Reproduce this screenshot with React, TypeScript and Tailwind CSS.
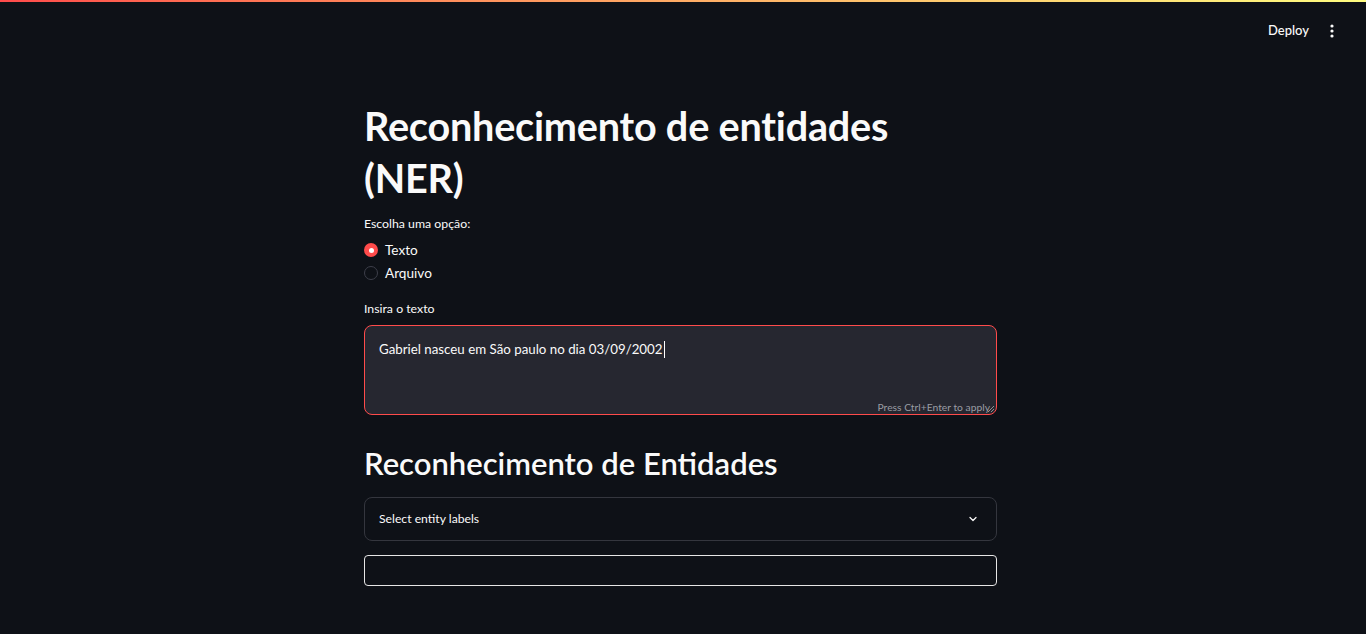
import React from "react";

export default function App() {
  const font = { fontFamily: '"Lato", "Noto Sans", sans-serif' };
  return (
    <div className="min-h-[634px] w-full bg-[#0e1117] text-[#fafafa]" style={font}>
      <div className="h-[2px] w-full bg-gradient-to-r from-[#ff4b4b] to-[#fffd80]" />
      <div className="flex h-[58px] items-center justify-end pr-[32px]">
        <span className="mr-[21px] mb-[1px] text-[13px] font-medium text-[#fafafa]">Deploy</span>
        <svg width="4" height="14" viewBox="0 0 4 14" className="mb-[1px]">
          <circle cx="2" cy="2" r="1.6" fill="#fafafa" />
          <circle cx="2" cy="7" r="1.6" fill="#fafafa" />
          <circle cx="2" cy="12" r="1.6" fill="#fafafa" />
        </svg>
      </div>
      <div className="pr-[5px]">
        <div className="mx-auto w-[633px] pt-[40px]">
          <h1 className="text-[39.6px] font-bold leading-[52px] tracking-[-0.2px]">
            Reconhecimento de entidades (NER)
          </h1>
          <div className="mt-[10px] text-[12.3px] leading-[20px]">Escolha uma opção:</div>
          <div className="mt-[6px] flex flex-col gap-[3px]">
            <div className="flex h-[20px] items-center gap-[7px]">
              <span className="flex h-[14px] w-[14px] items-center justify-center rounded-full bg-[#ff4b4b]">
                <span className="h-[5px] w-[5px] rounded-full bg-white" />
              </span>
              <span className="text-[13.6px]">Texto</span>
            </div>
            <div className="flex h-[20px] items-center gap-[7px]">
              <span className="h-[14px] w-[14px] rounded-full border border-[#3d3f4a] bg-[#0e1117]" />
              <span className="text-[13.6px]">Arquivo</span>
            </div>
          </div>
          <div className="mt-[16px] text-[12.3px] leading-[20px]">Insira o texto</div>
          <div className="relative mt-[6px] h-[90px] rounded-[8px] border border-[#ff4b4b] bg-[#262730] px-[14px] pt-[10px]">
            <span className="text-[13.3px] leading-[20px]">Gabriel nasceu em São paulo no dia 03/09/2002</span>
            <span className="ml-[1px] inline-block h-[17px] w-[1px] bg-white align-middle" />
            <span className="absolute bottom-[2px] right-[6px] text-[10.3px] leading-none text-[#9a9ca3]">Press Ctrl+Enter to apply</span>
            <svg width="6" height="6" viewBox="0 0 6 6" className="absolute bottom-[2px] right-[2px]">
              <path d="M0 6L6 0M3 6L6 3" stroke="#aaa" strokeWidth="0.8" />
            </svg>
          </div>
          <h2 className="mt-[28px] text-[31px] font-semibold leading-[40px]">Reconhecimento de Entidades</h2>
          <div className="mt-[14px] flex h-[44px] items-center justify-between rounded-[8px] border border-[#34363e] px-[14px]">
            <span className="text-[12.2px]">Select entity labels</span>
            <svg width="12" height="12" viewBox="0 0 24 24" fill="none" stroke="#fafafa" strokeWidth="2.5" strokeLinecap="round" strokeLinejoin="round" className="mr-[3px]">
              <path d="M6 9l6 6 6-6" />
            </svg>
          </div>
          <div className="mt-[14px] h-[31px] rounded-[4px] border border-[#e6e6e6]" />
        </div>
      </div>
    </div>
  );
}
